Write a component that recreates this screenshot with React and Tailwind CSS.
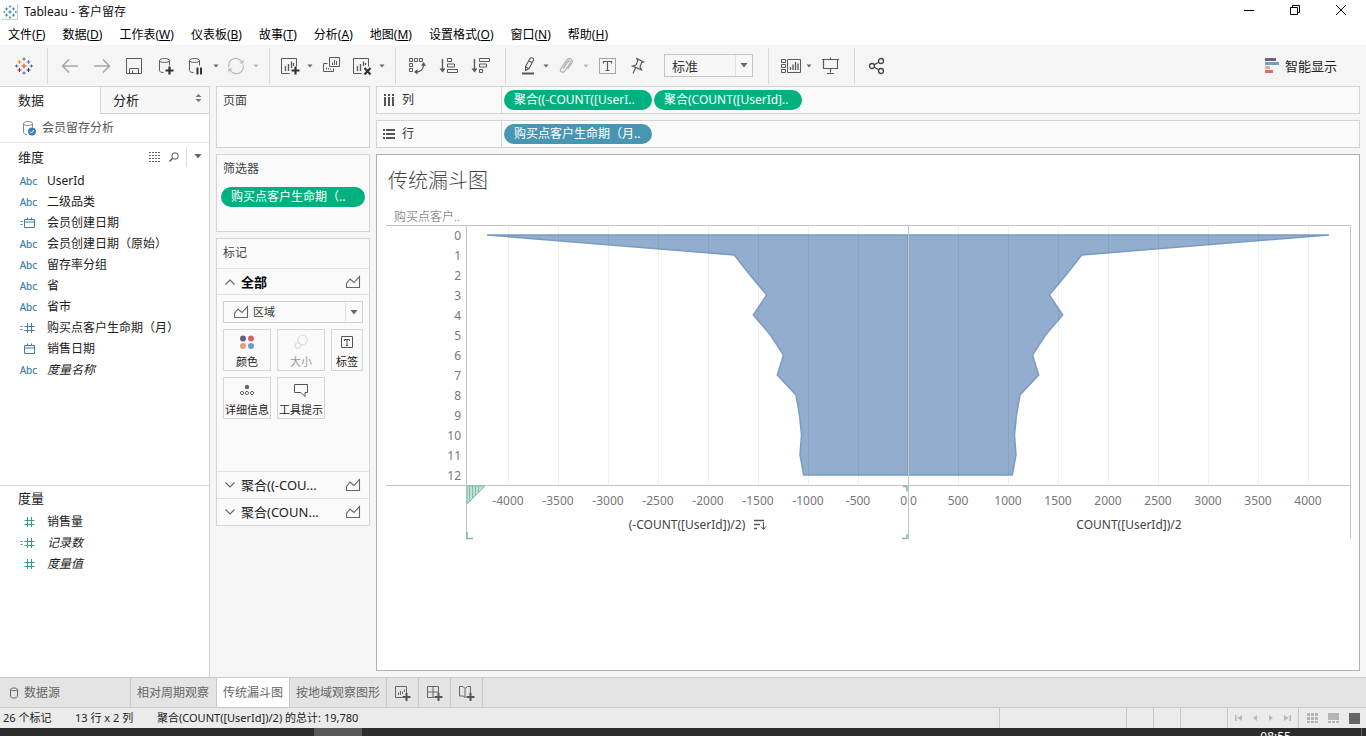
import React from "react";

const Svg = ({ w = 20, h = w, children, className = "", ...rest }) => (
  <svg
    width={w}
    height={h}
    viewBox={`0 0 ${w} ${h}`}
    fill="none"
    stroke="currentColor"
    className={`block shrink-0 ${className}`}
    aria-hidden="true"
    {...rest}
  >
    {children}
  </svg>
);

/* ---------- logo ---------- */

const plus = (x, y, r) => `M${x - r} ${y}h${2 * r}M${x} ${y - r}v${2 * r}`;

const Logo = ({ size, mono }) => {
  const c = mono
    ? ["#3f85ab", "#3f85ab", "#3f85ab", "#3f85ab", "#3f85ab", "#3f85ab"]
    : ["#e8762d", "#59879b", "#c72037", "#1f457e", "#eb912c", "#5b6591"];
  return (
    <svg width={size} height={size} viewBox="0 0 18 18" fill="none" className="block shrink-0" aria-hidden="true">
      <path d={plus(9, 9, 2.4)} stroke={c[0]} strokeWidth="1.4" />
      <path d={plus(4.5, 5, 2)} stroke={c[4]} strokeWidth="1.2" />
      <path d={plus(13.5, 5, 2)} stroke={c[1]} strokeWidth="1.2" />
      <path d={plus(4.5, 13, 2)} stroke={c[2]} strokeWidth="1.2" />
      <path d={plus(13.5, 13, 2)} stroke={c[3]} strokeWidth="1.2" />
      <path d={plus(9, 2, 1.6) + plus(9, 16, 1.6)} stroke={c[5]} strokeWidth="1" />
      <path d={plus(1.6, 9, 1.5) + plus(16.4, 9, 1.5)} stroke={c[5]} strokeWidth="1" />
    </svg>
  );
};

/* ---------- toolbar icons ---------- */

const BackIcon = () => (
  <Svg stroke="#a8a8a8" strokeWidth="1.6"><path d="M18 10H3M9 3.5L2.5 10L9 16.5" /></Svg>
);
const ForwardIcon = () => (
  <Svg stroke="#a8a8a8" strokeWidth="1.6"><path d="M2 10h15M11 3.5L17.5 10L11 16.5" /></Svg>
);
const SaveIcon = () => (
  <Svg><path d="M2.5 2.5h15v15h-15zM5.500 17v-4.500h9V17M8.500 14.500V17" /></Svg>
);
const CylinderPath = "M3.500 4.500c0-2.600 10-2.600 10 0s-10 2.600-10 0v10c0 1.200 1.500 2 4 2M13.500 4.500v5";
const AddDataIcon = () => (
  <Svg><path d={CylinderPath} /><path d="M13.500 10.500v8M9.500 14.500h8" strokeWidth="2.2" stroke="#333" /></Svg>
);
const PauseIcon = () => (
  <Svg><path d={CylinderPath} /><path d="M11.500 11.500v7M15 11.500v7" strokeWidth="2" stroke="#333" /></Svg>
);
const RefreshIcon = () => (
  <Svg stroke="#b9b9b9" strokeWidth="1.2">
    <path d="M3 11.500A7 7 0 0 1 15.500 5.500M17 8.500A7 7 0 0 1 4.500 14.500" />
    <path d="M17.500 3.500v4h-4zM2.500 16.500v-4h4z" fill="#b9b9b9" stroke="none" />
  </Svg>
);
const ChartBase = "M9.500 17.500h-8v-15h15v8";
const NewSheetIcon = () => (
  <Svg><path d={ChartBase} /><path d="M5.500 15v-5M8.500 15V8M11.500 12V5.500M13.500 10V7" strokeWidth="1.300" /><path d="M15.500 10.500v8M11.500 14.500h8" strokeWidth="2.200" stroke="#333" /></Svg>
);
const DuplicateIcon = () => (
  <Svg><path d="M7.500 1.500h10v9h-10zM5.500 7.500h-4v8h10v-3" /><path d="M10.500 9V6.500M12.500 9V4M14.500 9V5M4.500 13.500v-2M6.500 13.500v-1.500M8.500 13.500v-1" /></Svg>
);
const ClearSheetIcon = () => (
  <Svg><path d={ChartBase} /><path d="M5.500 15v-5M8.500 15V8M11.500 10V5.500M13.500 9V7" strokeWidth="1.300" /><path d="M12.500 12l6 6.500M18.500 12l-6 6.500" strokeWidth="2.200" stroke="#333" /></Svg>
);
const SwapIcon = () => (
  <Svg>
    <path d="M2.500 2.500h3v3h-3zM7.500 2.500h3v3h-3zM12.500 2.500h3v3h-3zM2.500 7.500h3v3h-3zM2.500 12.500h3v3h-3z" />
    <path d="M8.500 16c5 0 8-3 8-7" strokeWidth="1.300" />
    <path d="M14 9.500l2.700-3.500l2.300 4zM10.500 13l-3.500 3l3.500 2.500z" fill="currentColor" stroke="none" />
  </Svg>
);
const SortAscIcon = () => (
  <Svg><path d="M3.500 3v12" strokeWidth="1.400" /><path d="M.5 12.500l3 4l3-4z" fill="currentColor" stroke="none" /><path d="M8.500 2.500h4v3h-4zM8.500 8h7v3h-7zM8.500 13.500h10v3h-10z" /></Svg>
);
const SortDescIcon = () => (
  <Svg><path d="M3.500 3v12" strokeWidth="1.400" /><path d="M.5 12.500l3 4l3-4z" fill="currentColor" stroke="none" /><path d="M8.500 2.500h10v3h-10zM8.500 8h7v3h-7zM8.500 13.500h3v3h-3z" /></Svg>
);
const PenIcon = () => (
  <Svg><path d="M12 2.500c1-1.500 4.500-.2 3.600 1.600l-4.600 8.400l-3.500 2v-4zM10.800 4.800l3.400 1.900M7.500 11l3.200 1.700" strokeWidth="1.100" /><path d="M4 17.500h12" strokeWidth="2" /></Svg>
);
const ClipIcon = () => (
  <Svg stroke="#b5b5b5" strokeWidth="1.300"><path d="M7 12.500l5-7c1.300-1.600 3.300-.3 2.300 1.400l-5.500 8c-2 2.700-5.600.6-3.900-2.300l6-8.600c2.300-3 6.800-.8 5 3l-4 5.800" /></Svg>
);
const LabelIcon = () => (
  <Svg><path d="M1.500 2.500h16v15h-16z" strokeDasharray="1 1" /><path d="M5.500 7.500v-2h8v2M9.500 5.500v9M7.500 14.500h4" strokeWidth="1.200" /></Svg>
);
const PinIcon = () => (
  <Svg><path d="M9 2.500l6.500 3.500l-2 .8l-1.500 4l1.500 3l-9-3.800l3.500-1l1.800-4zM7.500 12l-2.500 5.500" strokeWidth="1.200" /></Svg>
);
const ShowCardsIcon = () => (
  <Svg w={22} h={20}><path d="M1.500 3.500h4v3h-4zM1.500 8.500h4v3h-4zM1.500 13.500h4v3h-4zM7.500 3.500h13v13h-13z" /><path d="M10.500 14v-3M13 14V8.500M15.500 14V6M18 14V7.500" strokeWidth="1.300" /></Svg>
);
const PresentIcon = () => (
  <Svg><path d="M1 3.500h17M2.500 3.500v9h14v-9M9.500 12.500v4M6 17.500h7M9.500 1.500v2" strokeWidth="1.200" /></Svg>
);
const ShareIcon = () => (
  <Svg stroke="#444" strokeWidth="1.300"><circle cx="5" cy="10" r="2.500" /><circle cx="14" cy="5" r="2.500" /><circle cx="14" cy="15" r="2.500" /><path d="M7.200 8.800l4.600-2.600M7.200 11.200l4.600 2.600" /></Svg>
);

const Caret = ({ className = "text-[#666]" }) => (
  <svg width="8" height="5" viewBox="0 0 8 5" className={`block shrink-0 ${className}`} fill="currentColor" aria-hidden="true">
    <path d="M.5 0h7L4 4.500z" />
  </svg>
);

const Tool = ({ label, className = "w-8", children }) => (
  <button type="button" aria-label={label} className={`flex h-8 items-center justify-center text-[#5a5a5a] ${className}`}>
    {children}
  </button>
);
const Drop = ({ label, dim }) => (
  <button type="button" aria-label={label} className="flex h-8 w-3 items-center justify-center">
    <svg width="6" height="4" viewBox="0 0 6 4" fill={dim ? "#b5b5b5" : "#666"} aria-hidden="true"><path d="M.5 .5h5L3 3.500z" /></svg>
  </button>
);
const Sep = () => <span className="h-9 w-px bg-[#d8d8d8]" />;

/* ---------- field icons ---------- */

const Abc = () => <span className="text-[10px] leading-5 text-[#3f7fa3] [-webkit-text-stroke:0.2px]">Abc</span>;
const HashShape = () => <path d="M7.500 1v10M11.500 1v10M4.500 4.500h10M4.500 8.500h10" />;
const Hash = ({ calc }) => (
  <Svg w={17} h={12}>
    {calc && <path d="M.5 4.500h2M.5 7.500h2" />}
    <HashShape />
  </Svg>
);
const Cal = ({ calc }) => (
  <Svg w={17} h={12}>
    {calc && <path d="M.5 4.500h2M.5 7.500h2" />}
    <path d="M4.500 2.500h10v8h-10zM4.500 5h10M7.500 .5v2.500M11.500 .5v2.500" />
  </Svg>
);

const dimensions = [
  { icon: <Abc />, name: "UserId" },
  { icon: <Abc />, name: "二级品类" },
  { icon: <Cal calc />, name: "会员创建日期" },
  { icon: <Abc />, name: "会员创建日期（原始）" },
  { icon: <Abc />, name: "留存率分组" },
  { icon: <Abc />, name: "省" },
  { icon: <Abc />, name: "省市" },
  { icon: <Hash calc />, name: "购买点客户生命期（月）" },
  { icon: <Cal />, name: "销售日期" },
  { icon: <Abc />, name: "度量名称", italic: true },
];
const measures = [
  { icon: <Hash />, name: "销售量" },
  { icon: <Hash calc />, name: "记录数", italic: true },
  { icon: <Hash />, name: "度量值", italic: true },
];

const FieldList = ({ items, tone }) => (
  <ul>
    {items.map((f) => (
      <li key={f.name} className="flex h-[21px] items-center">
        <span className={`flex w-[47px] justify-end pr-2.5 ${tone}`}>{f.icon}</span>
        <span className={`whitespace-nowrap text-xs text-[#1c1c1c] ${f.italic ? "italic" : ""}`}>{f.name}</span>
      </li>
    ))}
  </ul>
);

/* ---------- header ---------- */

const menus = [
  ["文件", "F"], ["数据", "D"], ["工作表", "W"], ["仪表板", "B"], ["故事", "T"],
  ["分析", "A"], ["地图", "M"], ["设置格式", "O"], ["窗口", "N"], ["帮助", "H"],
];

const TitleBar = () => (
  <header className="flex h-6 items-center bg-white pl-0.5 text-xs text-[#111]">
    <span className="flex size-4 items-center justify-center border-b border-r border-[#ccc]"><Logo size={14} mono /></span>
    <h1 className="ml-1.5 flex-1">Tableau - 客户留存</h1>
    <div className="flex pb-1 pr-0.5 text-black">
      <button type="button" aria-label="最小化" className="flex w-[46px] justify-center"><Svg w={10}><path d="M0 5.500h10" /></Svg></button>
      <button type="button" aria-label="还原" className="flex w-[46px] justify-center"><Svg w={10}><path d="M.5 2.500h7v7h-7zM2.500 2.500v-2h7v7h-2" /></Svg></button>
      <button type="button" aria-label="关闭" className="flex w-[46px] justify-center"><Svg w={10}><path d="M0 0l10 10M10 0L0 10" /></Svg></button>
    </div>
  </header>
);

const MenuBar = () => (
  <nav className="flex h-[21px] items-center gap-[17px] bg-white pl-2 text-xs text-black">
    {menus.map(([t, k]) => (
      <button type="button" key={t} className="whitespace-nowrap">{t}(<span className="underline">{k}</span>)</button>
    ))}
  </nav>
);

const Toolbar = () => (
  <div className="flex h-[41px] items-center bg-[#f5f5f5]">
    <Tool label="开始页面" className="w-[47px]"><Logo size={18} /></Tool>
    <Sep />
    <div className="flex pl-1.5 pr-[7px]">
      <Tool label="撤消"><BackIcon /></Tool>
      <Tool label="重做"><ForwardIcon /></Tool>
      <Tool label="保存"><SaveIcon /></Tool>
      <Tool label="新建数据源"><AddDataIcon /></Tool>
      <Tool label="暂停自动更新" className="w-7"><PauseIcon /></Tool>
      <Drop label="自动更新选项" />
      <Tool label="运行更新" className="w-7"><RefreshIcon /></Tool>
      <Drop label="运行选项" dim />
    </div>
    <Sep />
    <div className="flex pl-1.5 pr-[7px]">
      <Tool label="新建工作表" className="w-7"><NewSheetIcon /></Tool>
      <Drop label="新建选项" />
      <Tool label="复制"><DuplicateIcon /></Tool>
      <Tool label="清除工作表" className="w-7"><ClearSheetIcon /></Tool>
      <Drop label="清除选项" />
    </div>
    <Sep />
    <div className="flex pl-[5px] pr-2">
      <Tool label="交换行和列"><SwapIcon /></Tool>
      <Tool label="升序排序"><SortAscIcon /></Tool>
      <Tool label="降序排序"><SortDescIcon /></Tool>
    </div>
    <Sep />
    <div className="flex items-center pl-2.5 pr-[15px]">
      <Tool label="突出显示" className="w-6"><PenIcon /></Tool>
      <Drop label="突出显示选项" />
      <Tool label="对成员进行分组" className="w-7"><ClipIcon /></Tool>
      <Drop label="分组选项" dim />
      <Tool label="显示标记标签"><LabelIcon /></Tool>
      <Tool label="固定轴" className="w-7"><PinIcon /></Tool>
      <div className="relative ml-3">
        <select aria-label="适合" className="block h-[23px] w-[89px] appearance-none border border-[#c4c4c4] bg-[#f7f7f7] pl-[7px] text-[13px] leading-5 text-[#333]">
          <option>标准</option>
        </select>
        <span className="pointer-events-none absolute inset-y-px right-px flex w-[17px] items-center justify-center border-l border-[#e2e2e2]"><Caret /></span>
      </div>
    </div>
    <Sep />
    <div className="flex pl-2.5 pr-[7px]">
      <Tool label="显示/隐藏卡" className="w-6"><ShowCardsIcon /></Tool>
      <Drop label="卡选项" />
      <Tool label="演示模式"><PresentIcon /></Tool>
    </div>
    <Sep />
    <Tool label="共享" className="w-11"><ShareIcon /></Tool>
    <button type="button" className="ml-auto mr-[29px] flex items-center gap-1.5 text-[13px] text-[#222]">
      <svg width="14" height="16" viewBox="0 0 14 16" className="block" aria-hidden="true">
        <path d="M0 0h11v3H0z" fill="#6d6284" />
        <path d="M0 4h14v3H0z" fill="#6f9fbd" />
        <path d="M0 8h5v3H0z" fill="#f5a58d" />
        <path d="M0 12h8v3H0z" fill="#dd6a71" />
      </svg>
      智能显示
    </button>
  </div>
);

/* ---------- data pane ---------- */

const DataPane = () => (
  <aside className="flex w-[210px] shrink-0 flex-col border-r border-t border-[#d4d4d4] bg-white">
    <div className="flex h-[27px] shrink-0 text-[13px] text-[#222]" role="tablist">
      <button type="button" role="tab" aria-selected="true" className="w-[100px] pb-0.5 pl-[18px] text-left">数据</button>
      <button type="button" role="tab" aria-selected="false" className="flex flex-1 items-center justify-between border-b border-l border-[#d4d4d4] bg-[#f7f7f7] pl-3 pr-[7px]">
        分析
        <svg width="7" height="8" viewBox="0 0 7 8" fill="#777" className="mb-1" aria-hidden="true"><path d="M.5 3h6L3.500 0zM.5 5h6L3.500 8z" /></svg>
      </button>
    </div>
    <button type="button" className="flex h-[29px] shrink-0 items-center gap-1.5 border-b border-[#e2e2e2] pl-[22px] text-xs text-[#555]">
      <svg width="14" height="16" viewBox="0 0 14 16" fill="none" className="block" aria-hidden="true">
        <path d="M1.500 3.500c0-2.600 9-2.600 9 0s-9 2.600-9 0v9c0 1 1 1.700 3.500 2M10.500 3.500v4" stroke="#888" />
        <circle cx="10" cy="11.500" r="4" fill="#3d83b4" />
        <path d="M8 11.500l1.500 1.500l2.500-3" stroke="#fff" />
      </svg>
      会员留存分析
    </button>
    <section className="flex h-[342px] shrink-0 flex-col">
      <div className="flex h-[27px] shrink-0 items-center pl-[18px]">
        <h2 className="flex-1 text-[13px] text-[#222]">维度</h2>
        <button type="button" aria-label="查看字段" className="text-[#666]">
          <Svg w={12} h={10}><path d="M0 .5h12M0 3.500h12M0 6.500h12M0 9.500h12" strokeDasharray="2 1" /></Svg>
        </button>
        <button type="button" aria-label="搜索" className="ml-2 text-[#555]">
          <Svg w={10}><circle cx="6" cy="4" r="3.200" /><path d="M3.700 6.300L.5 9.500" strokeWidth="1.400" /></Svg>
        </button>
        <span className="ml-[7px] h-5 w-px bg-[#dcdcdc]" />
        <button type="button" aria-label="数据窗格菜单" className="mx-[7px]"><Caret /></button>
      </div>
      <FieldList items={dimensions} tone="text-[#3f7fa3]" />
    </section>
    <section className="flex-1 border-t border-[#d9d9d9]">
      <h2 className="h-[25px] pl-[18px] text-[13px] leading-6 text-[#222]">度量</h2>
      <FieldList items={measures} tone="text-[#35a07a]" />
    </section>
  </aside>
);

/* ---------- cards ---------- */

const AreaIcon = () => (
  <Svg w={16} h={14} className="text-[#666]"><path d="M1.500 12.500V8.500l3.500-4.500l4 3.500L14.500 1.500v11z" strokeWidth="1.100" /></Svg>
);
const Chevron = ({ up }) => (
  <Svg w={10} h={6} className="text-[#666]"><path d={up ? "M.5 5.500L5 1l4.500 4.500" : "M.5 .5L5 5L9.500 .5"} strokeWidth="1.100" /></Svg>
);
const MarkButton = ({ label, className = "w-12", dim, children }) => (
  <button type="button" className={`flex h-[42px] flex-col items-center justify-between border border-[#d6d6d6] bg-[#fafafa] pt-[3px] ${className}`}>
    <span className="flex h-[18px] items-center">{children}</span>
    <span className={`whitespace-nowrap text-[11px] leading-4 ${dim ? "text-[#999]" : "text-[#222]"}`}>{label}</span>
  </button>
);
const card = "border border-[#d4d4d4] bg-[#fafafa]";
const MarksRow = ({ text }) => (
  <button type="button" className="flex h-[27px] items-center border-t border-[#e2e2e2] px-2 text-left text-[13px] text-[#222]">
    <Chevron />
    <span className="ml-1.5 flex-1">{text}</span>
    <AreaIcon />
  </button>
);

const Cards = () => (
  <div className="flex w-[154px] shrink-0 flex-col gap-1.5">
    <section className={`h-[62px] px-1.5 pt-1 ${card}`}>
      <h2 className="text-xs leading-5 text-[#444]">页面</h2>
    </section>
    <section className={`h-[78px] px-1 pt-1 ${card}`}>
      <h2 className="pl-0.5 text-xs leading-5 text-[#444]">筛选器</h2>
      <button type="button" className="mt-2 block h-5 w-full rounded-full bg-[#00b180] pl-2.5 text-left text-xs leading-5 text-white">购买点客户生命期（..</button>
    </section>
    <section className={`flex h-72 flex-col ${card}`}>
      <h2 className="h-[29px] pl-1.5 text-xs leading-7 text-[#444]">标记</h2>
      <button type="button" className="flex h-[27px] items-center border-y border-[#e2e2e2] px-2 text-left text-[13px] font-bold text-black">
        <Chevron up />
        <span className="ml-1.5 flex-1">全部</span>
        <AreaIcon />
      </button>
      <div className="relative mx-1.5 mt-[6px]">
        <select aria-label="标记类型" className="block h-[22px] w-full appearance-none border border-[#cfcfcf] bg-[#fafafa] pl-[29px] text-[11px] leading-4 text-[#333]">
          <option>区域</option>
        </select>
        <span className="pointer-events-none absolute inset-y-0 left-[10px] flex items-center"><AreaIcon /></span>
        <span className="pointer-events-none absolute inset-y-px right-px flex w-[17px] items-center justify-center border-l border-[#e2e2e2]"><Caret /></span>
      </div>
      <div className="mx-1.5 mt-1.5 flex flex-1 flex-wrap content-start gap-1.5">
        <MarkButton label="颜色">
          <svg width="16" height="16" viewBox="0 0 16 16" aria-hidden="true">
            <circle cx="4" cy="4.500" r="3" fill="#625f80" /><circle cx="12" cy="4.500" r="3" fill="#e05d70" />
            <circle cx="4" cy="12" r="3" fill="#f59a78" /><circle cx="12" cy="12" r="3" fill="#6a9fc4" />
          </svg>
        </MarkButton>
        <MarkButton label="大小" dim>
          <Svg w={16} stroke="#d8d8d8"><circle cx="9.500" cy="6" r="4.800" /><circle cx="5" cy="11.500" r="3" /></Svg>
        </MarkButton>
        <MarkButton label="标签" className="w-8">
          <Svg w={14} className="text-[#555]"><path d="M1.500 1.500h11v11h-11zM4.500 6V4.500h5V6M7 4.500v6M6 10.500h2" /></Svg>
        </MarkButton>
        <MarkButton label="详细信息">
          <Svg w={16} h={14} className="text-[#666]"><circle cx="8" cy="4" r="2.200" fill="currentColor" stroke="none" /><circle cx="3" cy="10" r="1.600" /><circle cx="8" cy="10" r="1.600" /><circle cx="13" cy="10" r="1.600" /></Svg>
        </MarkButton>
        <MarkButton label="工具提示">
          <Svg w={16} className="text-[#555]"><path d="M1.500 2.500h13v8h-2.500v4l-4-4h-6.500z" /></Svg>
        </MarkButton>
      </div>
      <MarksRow text="聚合((-COU..." />
      <MarksRow text="聚合(COUN..." />
    </section>
  </div>
);

/* ---------- shelves and view ---------- */

const Shelf = ({ icon, name, children }) => (
  <section className={`flex h-7 shrink-0 ${card}`}>
    <h2 className="flex w-[125px] items-center gap-[7px] border-r border-[#d4d4d4] pl-1.5 text-xs text-[#333]">{icon}{name}</h2>
    <div className="flex items-center gap-0.5 pl-0.5">{children}</div>
  </section>
);
const Pill = ({ tone, children }) => (
  <button type="button" className={`h-5 w-[148px] overflow-hidden whitespace-nowrap rounded-full pl-2.5 text-left text-xs leading-5 text-white ${tone}`}>{children}</button>
);

const values = [4210, 1737, 1580, 1413, 1547, 1375, 1245, 1307, 1120, 1085, 1065, 1080, 1043];
const ZERO = 522;
const ROW = 20;
const px = (v) => ZERO + v / 10;
const rowY = (i) => 30 + i * ROW;
const areaPoints = (sign) =>
  [`${ZERO},${rowY(0)}`, ...values.map((v, i) => `${px(sign * v)},${rowY(i)}`), `${ZERO},${rowY(12)}`].join(" ");
const ticks = [500, 1000, 1500, 2000, 2500, 3000, 3500, 4000];

const Chart = () => (
  <svg viewBox="0 0 965 336" className="block w-full text-xs" role="img" aria-label="传统漏斗图">
    <text x="8" y="16" fill="#5c5c5c" className="font-light">购买点客户..</text>
    {[1, -1].map((s) => (
      <polygon key={s} points={areaPoints(s)} fill="#92adcd" stroke="#7b9cc0" strokeWidth="1.500" />
    ))}
    {ticks.map((t) => (
      <path key={t} d={`M${px(t) + 0.5} 21V280M${px(-t) + 0.5} 21V280`} stroke="#000" strokeOpacity="0.060" />
    ))}
    <path d="M0 20.500H965M0 280.500H965" stroke="#c3c3c3" />
    <path d="M80.500 20.500V334M522.500 20.500V334M964.500 20.500V334" stroke="#c3c8c6" />
    {values.map((_, i) => (
      <text key={i} x="75" y={35 + i * ROW} textAnchor="end" fill="#777">{i}</text>
    ))}
    {ticks.map((t) => (
      <g key={t} fill="#777" textAnchor="middle">
        <text x={px(-t)} y="300">-{t}</text>
        <text x={px(t)} y="300">{t}</text>
      </g>
    ))}
    <text x="521" y="300" textAnchor="end" fill="#777">0</text>
    <text x="524" y="300" fill="#777">0</text>
    <text x="301" y="324" textAnchor="middle" fill="#444">(-COUNT([UserId])/2)</text>
    <text x="743" y="324" textAnchor="middle" fill="#444">COUNT([UserId])/2</text>
    <path d="M368 315.500h10M368 319.500h6M368 323.500h3" stroke="#555" strokeWidth="1.500" />
    <path d="M377.500 317v7M375 321.500l2.500 3l2.500-3" stroke="#555" fill="none" />
    <path d="M81 281h18L81 299z" fill="#bfe2d4" stroke="#7fbfa8" />
    <path d="M83.500 281v15M86.500 281v12M89.500 281v9M92.500 281v6" stroke="#7fbfa8" />
    <path d="M81 327v6.500h6M517 281.500h4v5M521 329v4.500h-5" stroke="#7fb8a6" strokeWidth="1.500" fill="none" />
  </svg>
);

const ColIcon = () => (
  <svg width="12" height="12" viewBox="0 0 12 12" fill="#555" className="block" aria-hidden="true"><path d="M1 0h2v2H1zM5 0h2v2H5zM9 0h2v2H9zM1 3h2v9H1zM5 3h2v9H5zM9 3h2v9H9z" /></svg>
);
const RowIcon = () => (
  <svg width="12" height="10" viewBox="0 0 12 10" fill="#555" className="block" aria-hidden="true"><path d="M0 0h2v2H0zM0 4h2v2H0zM0 8h2v2H0zM3 0h9v2H3zM3 4h9v2H3zM3 8h9v2H3z" /></svg>
);

const Worksheet = () => (
  <main className="flex min-w-0 flex-1 flex-col gap-1.5">
    <Shelf icon={<ColIcon />} name="列">
      <Pill tone="bg-[#00b180]">聚合((-COUNT([UserI..</Pill>
      <Pill tone="bg-[#00b180]">聚合(COUNT([UserId]..</Pill>
    </Shelf>
    <Shelf icon={<RowIcon />} name="行">
      <Pill tone="bg-[#4996b2]">购买点客户生命期（月..</Pill>
    </Shelf>
    <section className="min-h-0 flex-1 overflow-hidden border border-[#b0b0b0] bg-white pl-[9px] pr-2 pt-2.5">
      <h2 className="h-10 pl-0.5 text-xl leading-8 font-light text-[#444]">传统漏斗图</h2>
      <Chart />
    </section>
  </main>
);

/* ---------- footer ---------- */

const SheetTab = ({ active, className = "px-1.5", children }) => (
  <button type="button" role="tab" aria-selected={!!active} className={`flex items-center whitespace-nowrap border-r border-[#c9c9c9] ${className} ${active ? "bg-white" : ""}`}>{children}</button>
);
const Plus = () => <path d="M12.500 8v8M8.500 12h8" strokeWidth="2" stroke="#555" />;

const SheetTabs = () => (
  <div className="flex h-[31px] shrink-0 border-y border-[#c9c9c9] bg-[#e4e4e4] text-xs text-[#666]" role="tablist">
    <SheetTab className="w-[131px] gap-[5px] pl-[9px]">
      <Svg w={10} h={12}><path d="M1.500 2.500c0-2 7-2 7 0v7c0 2-7 2-7 0zM1.500 2.500c0 1.500 7 1.500 7 0" /></Svg>
      数据源
    </SheetTab>
    <SheetTab className="min-w-[86px] px-1.5">相对周期观察</SheetTab>
    <SheetTab active>传统漏斗图</SheetTab>
    <SheetTab>按地域观察图形</SheetTab>
    <SheetTab className="w-8 justify-center"><Svg w={17} h={16}><path d="M8 12.500H1.500v-11h11V8M4.500 10V7.500M6.500 10V6M8.500 9V6.500M10.500 7V4.500" /><Plus /></Svg></SheetTab>
    <SheetTab className="w-8 justify-center"><Svg w={17} h={16}><path d="M8 12.500H1.500v-11h11V8M7 1.500v11M1.500 7h11" /><Plus /></Svg></SheetTab>
    <SheetTab className="w-8 justify-center"><Svg w={17} h={16}><path d="M7 13l-1.500-2H1.500v-9.500h3.500L7 3.500l2.500-2h3V8M7 3.500v9" /><Plus /></Svg></SheetTab>
  </div>
);

const NavButton = ({ label, d, className = "w-4" }) => (
  <button type="button" aria-label={label} className={`flex justify-center ${className}`}>
    <svg width="8" height="8" viewBox="0 0 8 8" fill="#b8b8b8" aria-hidden="true"><path d={d} /></svg>
  </button>
);
const Cell = ({ className }) => <span className={`h-full border-l border-[#c9c9c9] ${className}`} />;

const StatusBar = () => (
  <footer className="flex h-5 shrink-0 items-center bg-[#ebebeb] pl-[3px] text-[11px] text-[#222]">
    <span className="w-[72px]">26 个标记</span>
    <span className="w-[82px]">13 行 x 2 列</span>
    <span className="flex-1">聚合(COUNT([UserId])/2) 的总计: 19,780</span>
    <Cell className="w-[127px]" />
    <Cell className="w-[27px]" />
    <Cell className="w-[27px]" />
    <Cell className="w-[47px]" />
    <div className="flex h-full w-[71px] items-center border-l border-[#c9c9c9] pl-[3px]">
      <NavButton label="第一个" d="M0 1h1.500v6H0zM7 1v6L2.500 4z" />
      <NavButton label="上一个" d="M6 1v6L2 4z" />
      <NavButton label="下一个" d="M2 1v6l4-3z" />
      <NavButton label="最后一个" d="M6.500 1H8v6H6.500zM1 1v6l4.500-3z" />
    </div>
    <div className="flex h-full items-center gap-2.5 border-l border-[#c9c9c9] pl-2 pr-1.5">
      <button type="button" aria-label="工作表排序程序"><svg width="11" height="11" viewBox="0 0 11 11" fill="#b5b5b5" className="block" aria-hidden="true"><path d="M0 0h3v3H0zM4 0h3v3H4zM8 0h3v3H8zM0 4h3v3H0zM4 4h3v3H4zM8 4h3v3H8zM0 8h3v2H0zM4 8h3v2H4zM8 8h3v2H8z" /></svg></button>
      <button type="button" aria-label="胶片"><svg width="11" height="11" viewBox="0 0 11 11" fill="#b5b5b5" className="block" aria-hidden="true"><path d="M0 0h11v7H0zM0 8h3v2H0zM4 8h3v2H4zM8 8h3v2H8z" /></svg></button>
      <button type="button" aria-label="选项卡"><svg width="11" height="11" viewBox="0 0 11 11" fill="#666" className="block" aria-hidden="true"><path d="M0 0h11v11H0z" /></svg></button>
    </div>
  </footer>
);

const Taskbar = () => (
  <div className="flex h-2 shrink-0 overflow-hidden bg-[#2c2c2c]">
    <span className="w-[314px]" />
    <span className="w-12 bg-[#585858]" />
    <span className="ml-auto mr-[70px] pt-[3px] text-xs leading-3 text-white">08:55</span>
    <span className="mr-1 w-px bg-[#666]" />
  </div>
);

export default function App() {
  return (
    <div className="flex h-screen flex-col overflow-hidden bg-[#f5f5f5] leading-4 [font-family:'Noto_Sans','Noto_Sans_CJK_SC',sans-serif]">
      <TitleBar />
      <MenuBar />
      <Toolbar />
      <div className="flex min-h-0 flex-1">
        <DataPane />
        <div className="flex min-w-0 flex-1 gap-1.5 pb-1.5 pl-1.5 pr-1.5">
          <Cards />
          <Worksheet />
        </div>
      </div>
      <SheetTabs />
      <StatusBar />
      <Taskbar />
    </div>
  );
}
